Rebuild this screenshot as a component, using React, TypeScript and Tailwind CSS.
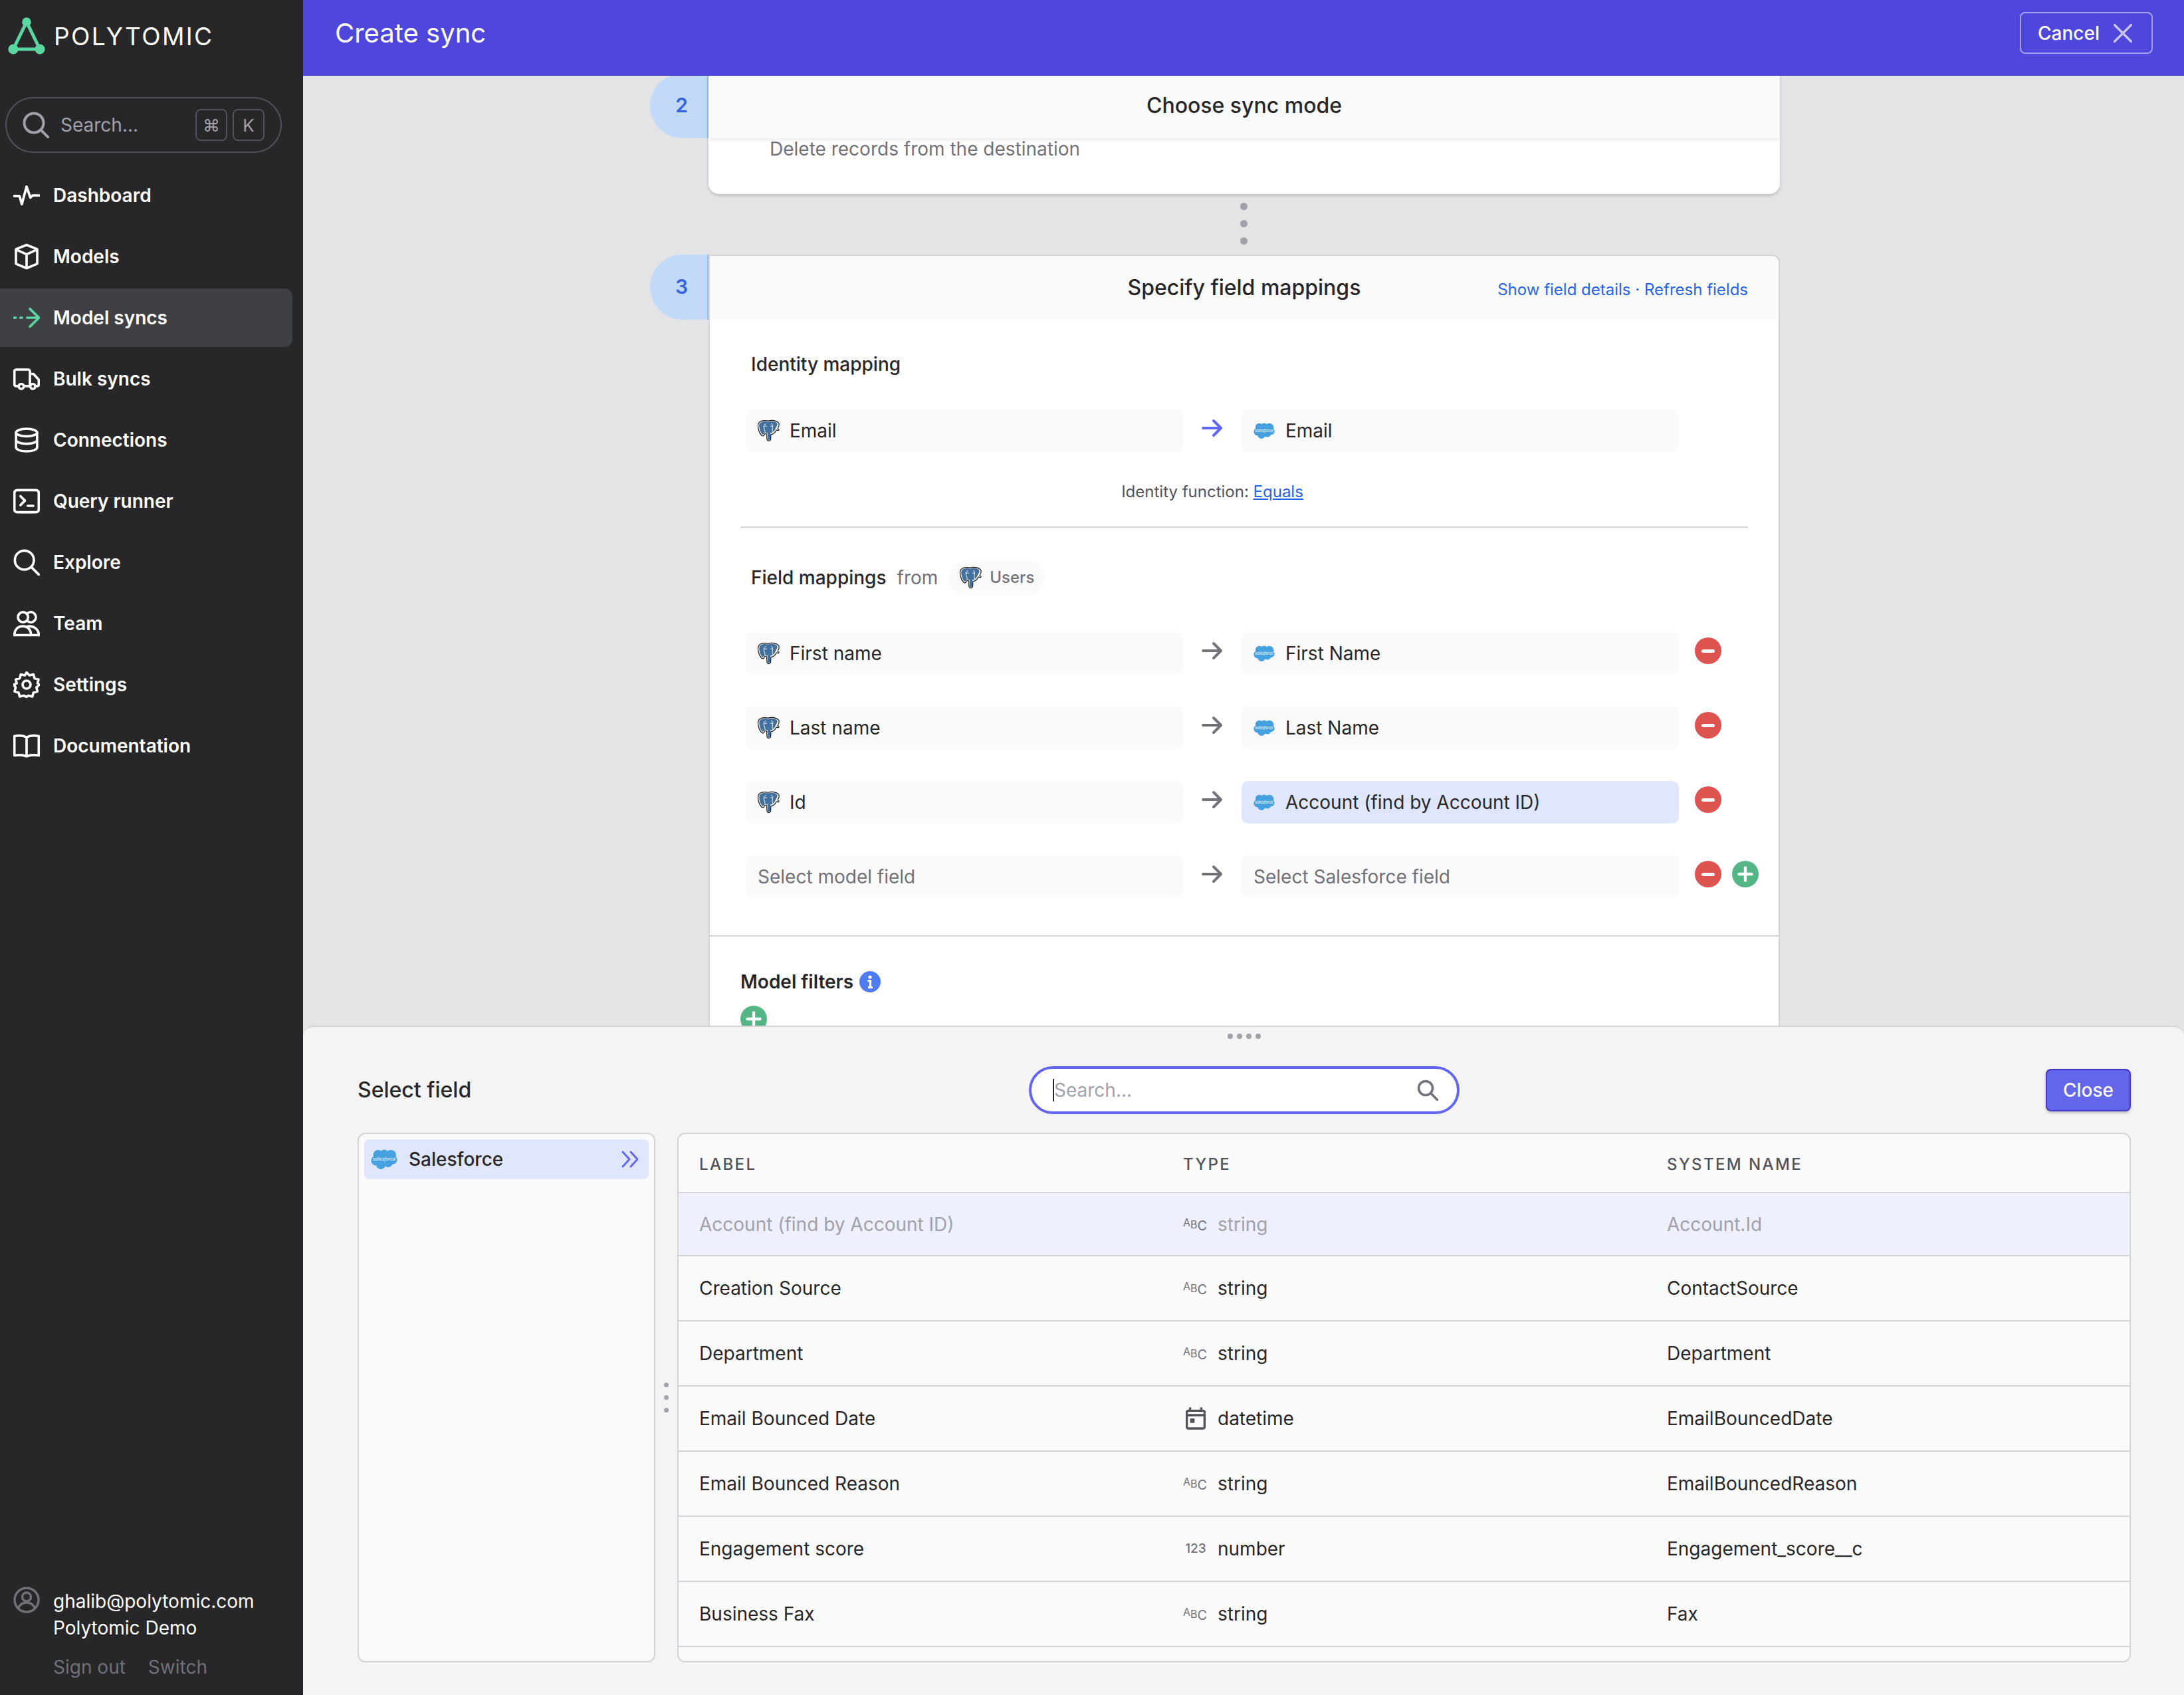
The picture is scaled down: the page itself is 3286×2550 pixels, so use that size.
import React from "react";

const S = { fill: "none", stroke: "currentColor", strokeWidth: 2.2, strokeLinecap: "round" as const, strokeLinejoin: "round" as const };

function Ico({ children, className = "w-[40px] h-[40px] shrink-0" }: { children: React.ReactNode; className?: string }) {
  return <svg viewBox="0 0 24 24" className={className} {...S}>{children}</svg>;
}

const navItems: { label: string; icon: React.ReactNode; active?: boolean }[] = [
  { label: "Dashboard", icon: <Ico><path d="M.8 12.5h4.8L7.7 20 12 4l3.4 10 2-2h5.8" /></Ico> },
  { label: "Models", icon: <Ico><path d="M12 1.5l9.6 3.8v13.2L12 22.5l-9.6-4V5.3zM2.4 5.6L12 10l9.6-4.4M12 10v12.5" /></Ico> },
  { label: "Model syncs", active: true, icon: <Ico><path d="M.8 12h1.4M6.4 12h1.4M12.5 12h10.5M15 4l8.2 8-8.2 8" stroke="#5cd6a0" /></Ico> },
  { label: "Bulk syncs", icon: <Ico><path d="M5 18.5H2.6A1.6 1.6 0 0 1 1 17V5.2C1 4.4 1.7 3.6 2.6 3.6h10.8c.9 0 1.6.8 1.6 1.6v13.3M9.6 18.5h5.4M15 7.5h3.2l4.8 5.2v4.4c0 .8-.6 1.4-1.4 1.4h-.8" /><circle cx="7.2" cy="18.8" r="2.3" /><circle cx="17.6" cy="18.8" r="2.3" /></Ico> },
  { label: "Connections", icon: <Ico><ellipse cx="12" cy="5.2" rx="9.5" ry="3.4" /><path d="M2.5 5.2v13.6c0 1.9 4.3 3.4 9.5 3.4s9.5-1.5 9.5-3.4V5.2M2.5 12c0 1.9 4.3 3.4 9.5 3.4s9.5-1.5 9.5-3.4" /></Ico> },
  { label: "Query runner", icon: <Ico><rect x="1" y="2" width="22" height="20" rx="2.5" /><path d="M6.5 7.5l4 4-4 4M13 16.2h5" /></Ico> },
  { label: "Explore", icon: <Ico><circle cx="10" cy="10" r="8.6" /><path d="M16.4 16.4L23 23" /></Ico> },
  { label: "Team", icon: <Ico><circle cx="8.8" cy="6.3" r="4.6" /><path d="M13.2 2.5a4.6 4.6 0 1 1 0 7.6" /><path d="M1 22.5c0-4.8 3-8 7.5-8s7.5 3.2 7.5 8zM13 14.6c5.5-.8 10 2.6 10 7.9h-7" /></Ico> },
  { label: "Settings", icon: <Ico><circle cx="12" cy="12" r="3.6" /><path d="M12 1l2.6 2.6 3.6-.9 1 3.6 3.6 1-.9 3.6L23.5 12l-2.6 2.6.9 3.6-3.6 1-1 3.6-3.6-.9L12 23l-2.6-1.1-3.6.9-1-3.6-3.6-1 .9-3.6L.5 12l2.6-1.1-.9-3.6 3.6-1 1-3.6 3.6.9z" /></Ico> },
  { label: "Documentation", icon: <Ico><path d="M12 21.5c-3-1.3-7-1.5-11-.8V3.3c4-.8 8-.6 11 1 3-1.6 7-1.8 11-1v17.4c-4-.7-8-.5-11 .8zM12 4.3v17" /></Ico> },
];

function Elephant({ className = "w-[34px] h-[34px] shrink-0" }: { className?: string }) {
  return (
    <svg viewBox="0 0 32 32" className={className}>
      <path d="M15.5 2C10 .8 2.8 1.6 1.6 7 .8 12 3 19 6.4 22.6c2.2 2.2 3.6-.2 5-2.6.8.4 1.6.6 2.4.6l.2 7c.2 3.6 4.6 4.2 5.4.8l.2-7c3.4-.4 6.2-3 7.8-6.4l2.6.6c1 0 1.4-1 .6-1.6l-1.4-1c1.4-2.6 3.2-5.2 1.4-8.2C27.6 1.2 20.8.6 15.5 2z" fill="#fff" stroke="#111" strokeWidth="1.1" />
      <path d="M15.6 3.4C11 2.2 4 3 3.2 7.4c-.7 4 1.3 10.4 4.2 13.8 1.2 1.2 2.4-1 3.8-3.2 1 .7 2.2 1.1 3.8 1.1l.2 8.6c.2 2.4 3.2 2.6 3.6.4l.2-8.9c3.4-.2 5.8-2.8 7.2-6.4 1.6-2.8 3.6-5.4 2-7.8-2.2-3-8.8-3-12.6-1.6z" fill="#44709e" />
      <path d="M12.4 6.4c-2.8.6-3.2 3.4-2.4 6.2.5 1.8 1.6 3.4 1.2 5.4M20 5.8c2.6 1 2.4 4.2 1.8 6.6-.4 1.6-.2 3.6.2 5.2M10 9.6h4M19 9.6h3" fill="none" stroke="#fff" strokeWidth="0.9" />
    </svg>
  );
}

function Cloud({ className = "w-[32px] h-[32px] shrink-0" }: { className?: string }) {
  return (
    <svg viewBox="0 0 40 40" className={className}>
      <g fill="#45a1e0">
        <circle cx="11" cy="13.5" r="7.5" />
        <circle cx="20" cy="11.5" r="6" />
        <circle cx="30" cy="14" r="8" />
        <circle cx="33" cy="21" r="6.5" />
        <circle cx="8" cy="22" r="7.5" />
        <circle cx="15" cy="28" r="7" />
        <circle cx="26" cy="25" r="7" />
        <rect x="8" y="12" width="24" height="14" />
      </g>
      <text x="20" y="22" textAnchor="middle" fill="#ffffff" fontSize="7" fontStyle="italic">salesforce</text>
    </svg>
  );
}

function Minus() {
  return (
    <span className="flex w-[40px] h-[40px] items-center justify-center rounded-full bg-[#dd5350]">
      <span className="w-[20px] h-[5px] rounded-full bg-white" />
    </span>
  );
}

function Plus({ className = "" }: { className?: string }) {
  return (
    <svg viewBox="0 0 40 40" className={`w-[40px] h-[40px] shrink-0 ${className}`}>
      <circle cx="20" cy="20" r="20" fill="#55b685" />
      <path d="M20 10.5v19M10.5 20h19" stroke="#fff" strokeWidth="4.4" strokeLinecap="round" />
    </svg>
  );
}

function Arrow({ color = "#71717a" }: { color?: string }) {
  return (
    <svg viewBox="0 0 32 28" className="w-[32px] h-[28px] mb-[8px]" fill="none" stroke={color} strokeWidth="4" strokeLinecap="round" strokeLinejoin="round">
      <path d="M2 14h27M18 3l11 11-11 11" />
    </svg>
  );
}

function MapRow({ left, right, hi, ph, arrow, plus, del = true }: { left: string; right: string; hi?: boolean; ph?: boolean; arrow?: string; plus?: boolean; del?: boolean }) {
  return (
    <div className="flex items-center h-[64px] ml-[54px]">
      <div className={`flex items-center w-[658px] h-[64px] rounded-[10px] bg-[#fafafa] gap-[15px] ${ph ? "pl-[18px]" : "pl-[17px]"}`}>
        {!ph && <Elephant />}
        <span className={`mb-[1px] ${ph ? "text-[#71717a]" : "text-[#27272a]"}`}>{left}</span>
      </div>
      <div className="flex items-center justify-center w-[88px]"><Arrow color={arrow} /></div>
      <div className={`flex items-center w-[658px] h-[64px] rounded-[10px] pl-[18px] gap-[16px] ${hi ? "bg-[#e0e7fd]" : "bg-[#fafafa]"}`}>
        {!ph && <Cloud />}
        <span className={`mb-[1px] ${ph ? "text-[#71717a]" : "text-[#27272a]"}`}>{right}</span>
      </div>
      <div className="flex gap-[16px] ml-[24px] mb-[8px]">
        {del && <Minus />}
        {plus && <Plus />}
      </div>
    </div>
  );
}

function Abc() {
  return (
    <span className="flex w-[38px] h-[26px] text-[#71717a] leading-none">
      <span className="self-start text-[16px] mt-[2px]">A</span>
      <span className="self-center text-[16px]">B</span>
      <span className="self-end text-[20px] mb-[1px]">C</span>
    </span>
  );
}

const rows: { label: string; type: string; sys: string; icon: "abc" | "cal" | "num" }[] = [
  { label: "Creation Source", type: "string", sys: "ContactSource", icon: "abc" },
  { label: "Department", type: "string", sys: "Department", icon: "abc" },
  { label: "Email Bounced Date", type: "datetime", sys: "EmailBouncedDate", icon: "cal" },
  { label: "Email Bounced Reason", type: "string", sys: "EmailBouncedReason", icon: "abc" },
  { label: "Engagement score", type: "number", sys: "Engagement_score__c", icon: "num" },
  { label: "Business Fax", type: "string", sys: "Fax", icon: "abc" },
];

function TypeIcon({ k }: { k: "abc" | "cal" | "num" }) {
  if (k === "abc") return <Abc />;
  if (k === "num") return <span className="w-[38px] text-center text-[19px] font-medium text-[#71717a]">123</span>;
  return (
    <svg viewBox="0 0 24 24" className="w-[40px] h-[40px] -ml-[1px] -mr-[1px]" fill="#52525b">
      <path d="M19 4h-1V2h-2v2H8V2H6v2H5c-1.1 0-2 .9-2 2v14c0 1.1.9 2 2 2h14c1.1 0 2-.9 2-2V6c0-1.1-.9-2-2-2zm0 16H5V10h14v10zm0-12H5V6h14v2z" />
      <rect x="7" y="12" width="4" height="4" rx="0.5" />
    </svg>
  );
}

export default function App() {
  return (
    <div className="flex w-[3286px] h-[2550px] overflow-hidden bg-[#e4e4e7] text-[28px] text-[#27272a] [font-family:Inter,sans-serif]">
      {/* Sidebar */}
      <aside className="flex flex-col w-[456px] shrink-0 bg-[#27272a] text-white">
        <div className="flex items-center h-[58px] mt-[25px] ml-[12px] gap-[13px]">
          <svg viewBox="0 0 56 58" className="w-[56px] h-[58px]">
            <path d="M28 8L8 49h40z" fill="none" stroke="#5cd6a0" strokeWidth="5" strokeLinejoin="round" />
            <circle cx="28" cy="8" r="6.8" fill="#5cd6a0" />
            <circle cx="8" cy="49" r="7.6" fill="#5cd6a0" />
            <circle cx="48" cy="49" r="7.6" fill="#5cd6a0" />
          </svg>
          <span className="text-[37px] tracking-[2.4px] leading-none">POLYTOMIC</span>
        </div>
        <div className="flex items-center h-[84px] mt-[63px] ml-[8px] w-[416px] rounded-full border-2 border-[#52525b] pl-[24px] pr-[24px]">
          <svg viewBox="0 0 40 40" className="w-[40px] h-[40px] shrink-0 text-[#a1a1aa]" fill="none" stroke="currentColor" strokeWidth="4" strokeLinecap="round">
            <circle cx="17" cy="17" r="14.5" />
            <path d="M27.5 27.5L39 39" />
          </svg>
          <span className="ml-[17px] text-[#a1a1aa]">Search...</span>
          <span className="ml-auto flex gap-[8px]">
            <span className="flex items-center justify-center w-[48px] h-[48px] rounded-[8px] border-2 border-[#52525b] text-[#a1a1aa] text-[26px]">⌘</span>
            <span className="flex items-center justify-center w-[48px] h-[48px] rounded-[8px] border-2 border-[#52525b] text-[#a1a1aa] text-[26px]">K</span>
          </span>
        </div>
        <nav className="flex flex-col gap-[4px] mt-[20px]">
          {navItems.map((n) => (
            <div key={n.label} className={`flex items-center h-[88px] w-[440px] pl-[20px] gap-[20px] rounded-r-[12px] font-semibold ${n.active ? "bg-[#3f3f46]" : ""}`}>
              {n.icon}
              <span>{n.label}</span>
            </div>
          ))}
        </nav>
        <div className="mt-auto mb-[22px] ml-[20px]">
          <div className="flex gap-[20px]">
            <svg viewBox="0 0 40 40" className="w-[40px] h-[40px] mt-[-1px] shrink-0 text-[#71717a]" fill="none" stroke="currentColor" strokeWidth="3.4">
              <circle cx="20" cy="20" r="18" />
              <circle cx="20" cy="15.5" r="6.5" />
              <path d="M7.5 32c3-6 7-8 12.5-8s9.5 2 12.5 8" />
            </svg>
            <div className="leading-[40px] mt-[1px]">
              <div>ghalib@polytomic.com</div>
              <div>Polytomic Demo</div>
            </div>
          </div>
          <div className="flex gap-[34px] ml-[60px] mt-[19px] text-[#71717a] leading-[40px]">
            <span>Sign out</span>
            <span>Switch</span>
          </div>
        </div>
      </aside>

      {/* Main */}
      <main className="flex flex-col flex-1 min-w-0">
        <header className="flex items-center justify-between h-[114px] shrink-0 bg-[#4f47dc] pl-[48px] pr-[47px] pb-[15px] text-white">
          <span className="text-[40px]">Create sync</span>
          <button className="flex items-center h-[63px] w-[200px] rounded-[8px] border-2 border-[#a5a1ec] pl-[25px] gap-[21px] font-medium">
            <span>Cancel</span>
            <svg viewBox="0 0 28 28" className="w-[28px] h-[28px]" fill="none" stroke="#c9c6f5" strokeWidth="3.4" strokeLinecap="round"><path d="M1.5 1.5l25 25M26.5 1.5l-25 25" /></svg>
          </button>
        </header>

        <div className="flex-1 min-h-0 overflow-hidden">
          {/* Step 2 */}
          <div className="flex ml-[522px] -mt-[4px]">
            <div className="flex items-center justify-center w-[88px] h-[98px] pl-[9px] pb-[2px] rounded-l-full bg-[#c2daf9] border-r-2 border-[#93c5fd] text-[#3563e0] font-semibold text-[30px]">2</div>
            <div className="w-[1612px] h-[182px] rounded-b-[16px] bg-white shadow-[0_2px_5px_rgba(0,0,0,0.2)] overflow-hidden">
              <div className="relative flex items-center justify-center h-[98px] bg-[#fafafa] text-[32px] font-medium shadow-[0_3px_6px_rgba(0,0,0,0.08)]">Choose sync mode</div>
              <div className="pl-[92px] text-[#71717a] leading-[32px]">Delete records from the destination</div>
            </div>
          </div>
          <div className="flex flex-col items-center w-[2830px] gap-[15px] mt-[13px] mb-[15px]">
            <span className="w-[11px] h-[11px] rounded-full bg-[#a1a1aa]" />
            <span className="w-[11px] h-[11px] rounded-full bg-[#a1a1aa]" />
            <span className="w-[11px] h-[11px] rounded-full bg-[#a1a1aa]" />
          </div>

          {/* Step 3 */}
          <div className="flex ml-[522px]">
            <div className="flex items-center justify-center w-[88px] h-[98px] pl-[9px] pb-[2px] rounded-l-full bg-[#c2daf9] border-r-2 border-[#93c5fd] text-[#3563e0] font-semibold text-[30px] shrink-0">3</div>
            <div className="w-[1612px] bg-white border-x-2 border-t-2 border-[#d4d4d8] rounded-tr-[12px] h-[1300px]">
              <div className="grid grid-cols-[1fr_auto_1fr] items-center h-[96px] bg-[#fafafa] rounded-tr-[10px]">
                <span />
                <span className="text-[32px] font-medium">Specify field mappings</span>
                <span className="justify-self-end pr-[46px] pt-[6px] text-[24px] text-[#2563eb]">Show field details · Refresh fields</span>
              </div>
              <div className="ml-[62px] mt-[47px] h-[40px] leading-[40px] font-medium">Identity mapping</div>
              <div className="mt-[48px]">
                <MapRow left="Email" right="Email" arrow="#6366f1" del={false} />
              </div>
              <div className="ml-[54px] w-[1404px] mt-[44px] text-center text-[24px] leading-[32px] text-[#52525b]">
                Identity function: <span className="text-[#2563eb] underline">Equals</span>
              </div>
              <div className="ml-[46px] w-[1516px] h-[2px] mt-[36px] bg-[#d4d4d8]" />
              <div className="flex items-center h-[52px] mt-[49px] ml-[62px]">
                <span className="font-medium">Field mappings</span>
                <span className="ml-[16px] text-[#71717a]">from</span>
                <span className="flex items-center ml-[16px] h-[52px] w-[145px] pl-[16px] gap-[12px] rounded-full bg-[#fafafa] text-[24px] font-medium text-[#71717a]">
                  <Elephant />Users
                </span>
              </div>
              <div className="flex flex-col gap-[48px] mt-[56px]">
                <MapRow left="First name" right="First Name" />
                <MapRow left="Last name" right="Last Name" />
                <MapRow left="Id" right="Account (find by Account ID)" hi />
                <MapRow left="Select model field" right="Select Salesforce field" ph plus />
              </div>
              <div className="h-[2px] mt-[56px] bg-[#d4d4d8]" />
              <div className="flex items-center h-[40px] mt-[48px] ml-[46px] gap-[9px]">
                <span className="font-semibold">Model filters</span>
                <svg viewBox="0 0 32 32" className="w-[32px] h-[32px]">
                  <circle cx="16" cy="16" r="16" fill="#4f7cf0" />
                  <circle cx="16" cy="9" r="2.6" fill="#fff" />
                  <path d="M12.5 14.5H16.5V24M13 24.5h7" fill="none" stroke="#fff" strokeWidth="3.2" />
                </svg>
              </div>
              <div className="ml-[46px] mt-[16px]"><Plus /></div>
            </div>
          </div>
        </div>

        {/* Drawer */}
        <section className="flex flex-col h-[1007px] shrink-0 rounded-t-[16px] border-t-2 border-[#d4d4d8] bg-[#f4f4f5] pl-[82px] pr-[80px]">
          <div className="flex justify-center gap-[6px] pt-[10px]">
            <span className="w-[8px] h-[8px] rounded-full bg-[#a1a1aa]" />
            <span className="w-[8px] h-[8px] rounded-full bg-[#a1a1aa]" />
            <span className="w-[8px] h-[8px] rounded-full bg-[#a1a1aa]" />
            <span className="w-[8px] h-[8px] rounded-full bg-[#a1a1aa]" />
          </div>
          <div className="grid grid-cols-[1fr_auto_1fr] items-center mt-[41px]">
            <span className="text-[32px] font-medium">Select field</span>
            <div className="flex items-center w-[648px] h-[72px] rounded-full border-4 border-[#6366f1] bg-white pl-[32px] pr-[28px]">
              <span className="w-[2px] h-[34px] bg-[#27272a]" />
              <span className="text-[#a1a1aa]">Search...</span>
              <svg viewBox="0 0 32 32" className="ml-auto w-[32px] h-[32px]" fill="none" stroke="#71717a" strokeWidth="3.6" strokeLinecap="round">
                <circle cx="13" cy="13" r="10.5" />
                <path d="M21 21l9.5 9.5" />
              </svg>
            </div>
            <button className="justify-self-end w-[128px] h-[64px] rounded-[8px] border-2 border-[#4338ca] bg-[#6366e8] text-white font-medium shadow-[0_2px_4px_rgba(0,0,0,0.25)]">Close</button>
          </div>

          <div className="flex h-[797px] mt-[28px]">
            <div className="w-[448px] shrink-0 rounded-[12px] border-2 border-[#d4d4d8] bg-[#fafafa] p-[8px]">
              <div className="flex items-center h-[60px] rounded-[8px] bg-[#e0e7fd] pl-[10px] pr-[14px]">
                <Cloud className="w-[40px] h-[40px] shrink-0" />
                <span className="ml-[17px] font-medium">Salesforce</span>
                <svg viewBox="0 0 28 28" className="ml-auto w-[28px] h-[28px]" fill="none" stroke="#6366f1" strokeWidth="3" strokeLinecap="round" strokeLinejoin="round">
                  <path d="M3 3l10 11L3 25M15 3l10 11-10 11" />
                </svg>
              </div>
            </div>
            <div className="flex flex-col items-center justify-center gap-[12px] w-[33px] shrink-0">
              <span className="w-[7px] h-[7px] rounded-full bg-[#a1a1aa]" />
              <span className="w-[7px] h-[7px] rounded-full bg-[#a1a1aa]" />
              <span className="w-[7px] h-[7px] rounded-full bg-[#a1a1aa]" />
            </div>
            <div className="flex-1 min-w-0 rounded-[12px] border-2 border-[#d4d4d8] bg-[#fafafa] overflow-hidden">
              <div className="grid grid-cols-[728px_728px_1fr] items-center h-[87px] pt-[4px] text-[24px] font-medium tracking-[2.4px] text-[#52525b]">
                <span className="pl-[31px]">LABEL</span>
                <span className="pl-[31px]">TYPE</span>
                <span className="pl-[31px]">SYSTEM NAME</span>
              </div>
              <div className="grid grid-cols-[728px_728px_1fr] items-center h-[95px] border-t-2 border-[#d4d4d8] bg-[#eef0fd] text-[#a1a1aa]">
                <span className="pl-[31px]">Account (find by Account ID)</span>
                <span className="flex items-center pl-[31px] gap-[14px]"><Abc />string</span>
                <span className="pl-[31px]">Account.Id</span>
              </div>
              {rows.map((r) => (
                <div key={r.label} className="grid grid-cols-[728px_728px_1fr] items-center h-[98px] border-t-2 border-[#d4d4d8]">
                  <span className="pl-[31px]">{r.label}</span>
                  <span className="flex items-center pl-[31px] gap-[14px]"><TypeIcon k={r.icon} />{r.type}</span>
                  <span className="pl-[31px]">{r.sys}</span>
                </div>
              ))}
              <div className="border-t-2 border-[#d4d4d8]" />
            </div>
          </div>
        </section>
      </main>
    </div>
  );
}
